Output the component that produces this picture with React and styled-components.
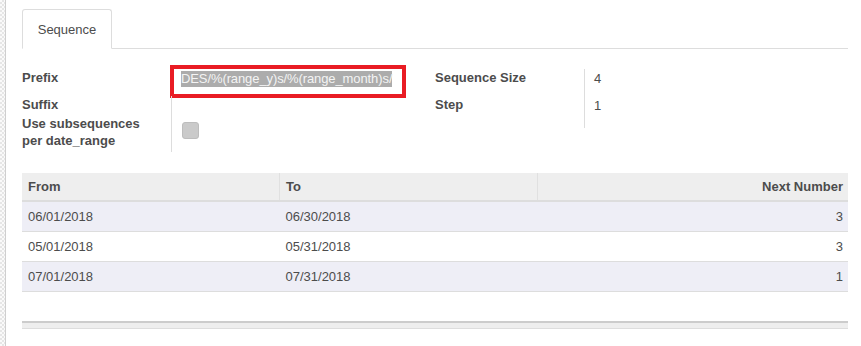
import React from 'react';
import styled, { createGlobalStyle } from 'styled-components';

const GlobalStyle = createGlobalStyle`
    html, body {
        margin: 0;
        padding: 0;
        background: #fff;
    }
    body {
        font-family: "Liberation Sans", Arial, sans-serif;
        font-size: 13px;
        color: #4c4c4c;
    }
`

const StyledPage = styled.div`
    display: flex;
    width: 861px;
    height: 346px;
    overflow: hidden;
`

const StyledSideStrip = styled.div`
    flex: 0 0 5px;
    background: repeating-conic-gradient(#e6e6e6 0 25%, #fafafa 0 50%) 0 0 / 4px 4px;
    border-right: 1px solid #cfcfcf;
`

const StyledSheet = styled.div`
    flex: 1 1 auto;
    padding: 9px 13px 0 16px;
`

const StyledTabBar = styled.div`
    display: flex;
    border-bottom: 1px solid #ddd;
`

const StyledTab = styled.div`
    height: 38px;
    width: 88px;
    display: flex;
    align-items: center;
    justify-content: center;
    border: 1px solid #ddd;
    border-bottom: 1px solid #fff;
    border-radius: 3px 3px 0 0;
    margin-bottom: -1px;
    background: #fff;
    color: #4c4c4c;
`

const StyledGroups = styled.div`
    display: grid;
    grid-template-columns: 1fr 1fr;
    margin-top: 20px;
`

const StyledGroup = styled.div`
    display: grid;
    grid-template-columns: 149px 1fr;
    align-content: start;
`

const StyledLabel = styled.div`
    font-weight: bold;
    line-height: 17px;
    color: #4c4c4c;
    min-height: ${props => props.h}px;
    box-sizing: border-box;
`

const StyledValue = styled.div`
    position: relative;
    border-left: 1px solid #ddd;
    padding-left: 9px;
    line-height: 17px;
    color: #4c4c4c;
    min-height: ${props => props.h}px;
    padding-top: ${props => props.pt || 0}px;
    box-sizing: border-box;
`

const StyledHighlightBox = styled.div`
    position: absolute;
    left: -2px;
    top: -4px;
    width: 236px;
    height: 33px;
    border: 4px solid #e91c24;
    box-sizing: border-box;
    pointer-events: none;
`

const StyledSelection = styled.span`
    background: #acacac;
    color: #f4f4f4;
    display: inline-block;
    margin-top: 2px;
    line-height: 16px;
    letter-spacing: -0.1px;
`

const StyledCheckbox = styled.span`
    display: inline-block;
    width: 15px;
    height: 15px;
    margin: 7px 0 0 1px;
    background: #cacaca;
    border: 1px solid #bdbdbd;
    border-radius: 3px;
`

const StyledTable = styled.table`
    width: 100%;
    margin-top: 21px;
    border-collapse: collapse;
    table-layout: fixed;
    font-size: 13px;
    color: #4c4c4c;
`

const StyledTh = styled.th`
    height: 27px;
    padding: 0 5px 0 6px;
    background: #eee;
    text-align: ${props => props.right ? 'right' : 'left'};
    font-weight: bold;
    border-bottom: 2px solid #ddd;
    border-left: ${props => props.first ? 'none' : '1px solid #e0e0e0'};
    width: ${props => props.w || 'auto'};
`

const StyledRow = styled.tr`
    background: ${props => props.odd ? '#eeeef6' : '#fff'};
    border-bottom: 1px solid #ddd;
`

const StyledTd = styled.td`
    height: 29px;
    padding: 0 5px 0 6px;
    text-align: ${props => props.right ? 'right' : 'left'};
`

const StyledTableFoot = styled.div`
    margin-top: 29px;
    height: 5px;
    background: #eee;
    border-top: 2px solid #ccc;
    border-bottom: 1px solid #ddd;
`

const ranges = [
    { from: '06/01/2018', to: '06/30/2018', next: 3 },
    { from: '05/01/2018', to: '05/31/2018', next: 3 },
    { from: '07/01/2018', to: '07/31/2018', next: 1 },
]

export default function App() {
    return (
        <React.Fragment>
            <GlobalStyle/>
            <StyledPage>
                <StyledSideStrip/>
                <StyledSheet>
                    <StyledTabBar>
                        <StyledTab>Sequence</StyledTab>
                    </StyledTabBar>

                    <StyledGroups>
                        <StyledGroup>
                            <StyledLabel h={27}>Prefix</StyledLabel>
                            <StyledValue h={27}>
                                <StyledSelection>DES/%(range_y)s/%(range_month)s/</StyledSelection>
                                <StyledHighlightBox/>
                            </StyledValue>
                            <StyledLabel h={19}>Suffix</StyledLabel>
                            <StyledValue h={19}/>
                            <StyledLabel h={37}>Use subsequences<br/>per date_range</StyledLabel>
                            <StyledValue h={37}>
                                <StyledCheckbox/>
                            </StyledValue>
                        </StyledGroup>
                        <StyledGroup>
                            <StyledLabel h={27}>Sequence Size</StyledLabel>
                            <StyledValue h={27} pt={1}>4</StyledValue>
                            <StyledLabel h={32}>Step</StyledLabel>
                            <StyledValue h={32} pt={1}>1</StyledValue>
                        </StyledGroup>
                    </StyledGroups>

                    <StyledTable>
                        <thead>
                            <tr>
                                <StyledTh first w="246px">From</StyledTh>
                                <StyledTh w="246px">To</StyledTh>
                                <StyledTh right>Next Number</StyledTh>
                            </tr>
                        </thead>
                        <tbody>
                            {ranges.map((r, i) => (
                                <StyledRow key={r.from} odd={i % 2 === 0}>
                                    <StyledTd>{r.from}</StyledTd>
                                    <StyledTd>{r.to}</StyledTd>
                                    <StyledTd right>{r.next}</StyledTd>
                                </StyledRow>
                            ))}
                        </tbody>
                    </StyledTable>
                    <StyledTableFoot/>
                </StyledSheet>
            </StyledPage>
        </React.Fragment>
    )
}
